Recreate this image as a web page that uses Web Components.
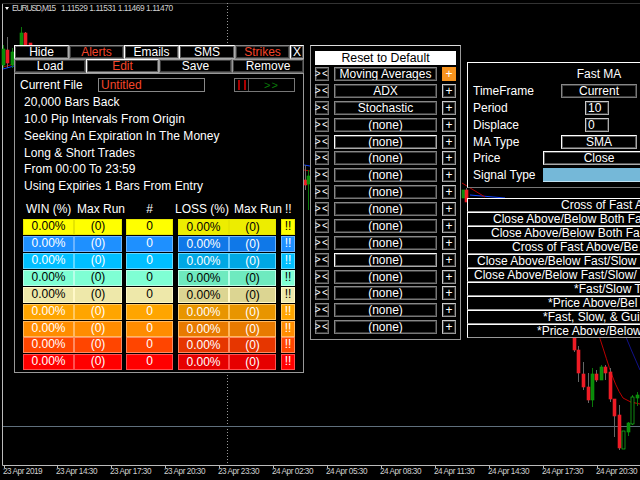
<!DOCTYPE html>
<html>
<head>
<meta charset="utf-8">
<title>EURUSD,M15</title>
<style>
  html, body { margin: 0; background: #000; }
  body { width: 640px; height: 480px; overflow: hidden; position: relative; font-family: "Liberation Sans", Arial, sans-serif; }
</style>
</head>
<body>
<chart-bg></chart-bg>

<float-panel style="left:14px;top:45px;width:290px;height:328px">
  <results-panel></results-panel>
</float-panel>

<float-panel style="left:310px;top:45px;width:151px;height:295px">
  <indicator-list></indicator-list>
</float-panel>

<float-panel style="left:467px;top:62px;width:173px;height:126px">
  <ma-settings></ma-settings>
</float-panel>

<float-panel style="left:467px;top:198px;width:173px;height:140px">
  <signal-list></signal-list>
</float-panel>

<script>
// chart behind everything: frame, grid lines, candles, time axis
class ChartBg extends HTMLElement {
  constructor() {
    super();
    this.attachShadow({ mode: "open" });
  }

  connectedCallback() {
    // x, high, low, body top, body bottom, colour
    const candles = [
      [3, 45, 68, 49, 65, "u"], [7, 37, 68, 50, 63, "d"], [12, 48, 68, 52, 65, "u"],
      [21, 27, 45, 33, 45, "u"], [25, 32, 46, 33, 45, "d"], [30, 43, 46, 43, 46, "d"],
      [305, 165, 190, 180, 185, "d"], [308, 170, 210, 176, 184, "u"],
      [463, 190, 198, 190, 198, "u"], [466, 188, 202, 190, 202, "d"],
      [574, 330, 352, 330, 350, "d"], [578, 346, 382, 350, 373, "d"],
      [583, 362, 390, 374, 387, "d"], [588, 373, 403, 387, 400, "d"],
      [592, 368, 407, 374, 400, "u"], [596, 370, 382, 374, 380, "d"],
      [601, 365, 380, 367, 380, "u"], [605, 365, 380, 367, 373, "d"],
      [610, 368, 402, 372, 399, "d"], [614, 399, 437, 399, 416, "d"],
      [619, 405, 450, 415, 448, "d"], [623, 431, 449, 431, 449, "h"],
      [628, 422, 436, 423, 432, "u"], [632, 395, 425, 397, 424, "h"],
      [637, 392, 406, 395, 398, "u"]
    ];
    const bars = candles.map(([x, hi, lo, top, bot, kind]) => {
      const fill = { u: "#0a8a0a", d: "#ee1c25", h: "#000" }[kind];
      const edge = { u: "#0c9c0c", d: "#ee1c25", h: "#1be820" }[kind];
      return `<path d="M${x + .5} ${hi}V${lo}" stroke="${kind === "d" ? "#666" : "#0a7a0a"}"/>
        <rect x="${x - 1}" y="${top}" width="3" height="${bot - top}" fill="${fill}" stroke="${edge}" stroke-width=".6"/>`;
    }).join("");
    const labels = [
      [3, "23 Apr 2019"], [56, "23 Apr 14:30"], [110, "23 Apr 17:30"], [164, "23 Apr 20:30"],
      [218, "23 Apr 23:30"], [272, "24 Apr 02:30"], [326, "24 Apr 05:30"], [380, "24 Apr 08:30"],
      [434, "24 Apr 11:30"], [488, "24 Apr 14:30"], [542, "24 Apr 17:30"], [596, "24 Apr 20:30"]
    ];
    this.shadowRoot.innerHTML = /* html */`
    <style>
      :host { position: absolute; inset: 0; display: block; }
      svg { position: absolute; inset: 0; }
      .title { position: absolute; left: 5px; top: 3px; display: flex; align-items: center;
        color: #d0d0d0; font: 8.4px/10px "Liberation Sans", sans-serif; letter-spacing: -.45px; white-space: pre; }
      .title::before { content: ""; border: 2.5px solid transparent; border-top: 3px solid #fff; border-bottom: 0; margin-right: 3px; }
      .title span:first-child { letter-spacing: -1.1px; margin-right: 6px; }
      .tick { position: absolute; top: 467px; color: #d0d0d0; font: 8.2px/10px "Liberation Sans", sans-serif; letter-spacing: -.45px; white-space: nowrap; }
    </style>
    <svg width="640" height="480" viewBox="0 0 640 480">
      <path d="M2.5 3V465.5H640" fill="none" stroke="#bbb"/>
      <path d="M2 3.5H640" stroke="#333"/>
      <path d="M227.5 3V465" stroke="#999" stroke-dasharray="1 2"/>
      <path d="M3 426.5H640" stroke="#5f6f7c"/>
      <path d="M3 69L14 66M304 165L310 166M470 195L505 198" fill="none" stroke="#14f"/>
      <path d="M3 67L14 64M304 170L310 171M462 183L485 197" fill="none" stroke="#b00"/>
      <path d="M597 330C606 355 612 382 623 398Q630 403 640 404" fill="none" stroke="#b00"/>
      <path d="M623 330Q632 352 640 370" fill="none" stroke="#118"/>
      ${bars}
      ${labels.map(([x]) => `<path d="M${x + 1.5} 465V468" stroke="#bbb"/>`).join("")}
    </svg>
    <div class="title"><span>EURUSD,M15</span><span>1.11529 1.11531 1.11469 1.11470</span></div>
    ${labels.map(([x, t]) => `<span class="tick" style="left:${x}px">${t}</span>`).join("")}
    `;
  }
}

// a window floating on the chart, its place on the canvas comes from the page
class FloatPanel extends HTMLElement {
  constructor() {
    super();
    this.attachShadow({ mode: "open" }).innerHTML = /* html */`
    <style>
      :host { position: absolute; display: block; box-sizing: border-box; background: #000; color: #fff; overflow: hidden; }
      ::slotted(*) { width: 100%; height: 100%; }
    </style>
    <slot></slot>`;
  }
}

// small button with the raised MT4 look
class MtButton extends HTMLElement {
  constructor() {
    super();
    this.attachShadow({ mode: "open" }).innerHTML = /* html */`
    <style>
      :host {
        display: flex; align-items: center; justify-content: center; box-sizing: border-box;
        height: 14px; background: var(--bg, #000); color: var(--fg, #fff);
        border: 1px solid; border-color: var(--b1, #999) var(--b2, #666) var(--b2, #666) var(--b1, #999);
        box-shadow: inset 0 0 0 1px var(--in, #3c3c3c);
        font-size: 12px; white-space: nowrap; overflow: hidden; line-height: 1;
      }
      :host([white]) { --b1: #fff; --b2: #aaa; --in: #555; }
      :host([dim]) { --b1: #888; --b2: #777; --in: #3c3c3c; }
      :host([red]) { --fg: #f4452a; }
    </style>
    <slot></slot>`;
  }
}

class ResultsPanel extends HTMLElement {
  constructor() {
    super();
    this.attachShadow({ mode: "open" });
  }

  connectedCallback() {
    const rows = [
      ["#ffff00", "#000", "#eded00", "#e6e600"],
      ["#1e90ff", "#fff", "#0f78e8", "#6ab4ff"],
      ["#00bfff", "#fff", "#00a8e4", "#60d8ff"],
      ["#7fffd4", "#000", "#6eeabf", "#b8ffe8"],
      ["#eee8aa", "#000", "#dcd592", "#fff8c8"],
      ["#ffa500", "#fff", "#e89500", "#ffc860"],
      ["#ff8c00", "#fff", "#e87a00", "#ffb860"],
      ["#ff4500", "#fff", "#e63600", "#ff8a60"],
      ["#ff0000", "#fff", "#e60000", "#ff5050"]
    ];
    const lines = [
      "20,000 Bars Back", "10.0 Pip Intervals From Origin", "Seeking An Expiration In The Money",
      "Long &amp; Short Trades", "From 00:00 To 23:59", "Using Expiries 1 Bars From Entry"
    ];
    const cell = (txt, bg, fg, edge, cls = "") =>
      `<span class="cell ${cls}" style="background:${bg};color:${fg};border-color:${edge}">${txt}</span>`;
    this.shadowRoot.innerHTML = /* html */`
    <style>
      :host { display: flex; flex-direction: column; font-size: 12px; }
      .tabs { display: grid; height: 14px; flex: none; }
      .top { grid-template-columns: 55px 55px 55px 56px 55px 14px; }
      .second { grid-template-columns: 72px 73px 73px 72px; }
      .body { flex: 1; border: 1px solid #999; padding: 4px 8px 0 5px; }
      .file { display: flex; align-items: center; height: 14px; margin-bottom: 2.875px; }
      .file label { width: 78px; }
      .file .name { width: 107px; justify-content: flex-start; padding-left: 2px; --b1: #888; --b2: #888; --in: transparent; }
      .pause { display: flex; margin-left: 29px; width: 61px; height: 14px; box-sizing: border-box; border: 1px solid #777; }
      .pause i { width: 14px; border-right: 1px solid #555; display: flex; gap: 4px; justify-content: center; padding: 1px 0; box-sizing: border-box; }
      .pause i::before, .pause i::after { content: ""; width: 2px; background: #a00; }
      .pause b { flex: 1; color: #0a7a0a; font-weight: 400; font-size: 11px; text-align: center; line-height: 12px; letter-spacing: 1px; }
      .line { height: 14px; line-height: 14px; margin-bottom: 2.875px; padding-left: 4px; white-space: nowrap; letter-spacing: .05px; }
      .head, .row { display: grid; grid-template-columns: 51px 48px 4px 47px 5px 51px 47px 5px 14px; margin-left: 3px; }
      .head { margin-top: 9px; margin-bottom: 3px; height: 14px; line-height: 14px; white-space: nowrap; }
      .head span { min-width: 0; }
      .row { height: 14px; margin-bottom: 2.875px; }
      .cell { box-sizing: border-box; border: 1px solid; text-align: center; line-height: 12px; }
      .loss { line-height: 14px; }
    </style>
    <div class="tabs top">
      <mt-button white>Hide</mt-button>
      <mt-button red dim>Alerts</mt-button>
      <mt-button white>Emails</mt-button>
      <mt-button white>SMS</mt-button>
      <mt-button red dim>Strikes</mt-button>
      <mt-button white>X</mt-button>
    </div>
    <div class="tabs second">
      <mt-button>Load</mt-button>
      <mt-button red white>Edit</mt-button>
      <mt-button>Save</mt-button>
      <mt-button>Remove</mt-button>
    </div>
    <div class="body">
      <div class="file">
        <label>Current File</label>
        <mt-button class="name" red>Untitled</mt-button>
        <div class="pause"><i></i><b>&gt;&gt;</b></div>
      </div>
      ${lines.map(t => `<div class="line">${t}</div>`).join("")}
      <div class="head">
        <span style="padding-left:3px">WIN (%)</span><span style="padding-left:3px">Max Run</span><span></span>
        <span style="text-align:center">#</span><span></span>
        <span style="margin-left:-3px">LOSS (%)</span><span style="padding-left:5px">Max Run</span><span></span>
        <span style="padding-left:4px">!!</span>
      </div>
      ${rows.map(([bg, fg, dark, edge]) => `<div class="row">
        ${cell("0.00%", bg, fg, edge)}${cell("(0)", bg, fg, edge)}<span></span>
        ${cell("0", bg, fg, edge)}<span></span>
        ${cell("0.00%", dark, fg, edge, "loss")}${cell("(0)", dark, fg, edge, "loss")}<span></span>
        ${cell("!!", bg, fg, edge)}
      </div>`).join("")}
    </div>
    `;
  }
}

class IndicatorList extends HTMLElement {
  constructor() {
    super();
    this.attachShadow({ mode: "open" });
  }

  connectedCallback() {
    const names = ["Moving Averages", "ADX", "Stochastic"].concat(Array(13).fill("(none)"));
    const rows = names.map((n, i) => /* html */`
      <div class="row">
        <mt-button class="swap" dim>&gt;&lt;</mt-button>
        <mt-button ${[4, 11].includes(i) ? "white" : "dim"}>${n}</mt-button>
        <mt-button style="${i === 0 ? "--bg:#f7931e;--b1:#f7931e;--b2:#f7931e;--in:#f7931e" : "--b1:#ccc;--b2:#999"}">+</mt-button>
      </div>`).join("");
    this.shadowRoot.innerHTML = /* html */`
    <style>
      :host { display: block; box-sizing: border-box; border: 1px solid #999; border-top-color: #ddd; padding: 5px 4px 0; }
      .reset { display: flex; align-items: center; justify-content: center; height: 14px; margin-bottom: 2px;
        background: #fff; color: #000; font-size: 12.3px; line-height: 14px; }
      .row { display: grid; grid-template-columns: 14px 103px 14px; column-gap: 5px; height: 14px; margin-bottom: 2.875px; }
      .swap { font-size: 10px; overflow: visible; letter-spacing: 1.5px; }
    </style>
    <div class="reset">Reset to Default</div>
    ${rows}
    `;
  }
}

class MaSettings extends HTMLElement {
  constructor() {
    super();
    this.attachShadow({ mode: "open" }).innerHTML = /* html */`
    <style>
      :host { display: block; box-sizing: border-box; border-top: 1px solid #fff; border-left: 1px solid #fff; border-bottom: 1px solid #777; padding: 4px 0 0 5px; font-size: 12px; }
      .head { height: 14px; margin: 0 0 2.875px 88px; width: 76px; text-align: center; line-height: 14px; }
      .row { display: grid; grid-template-columns: 88px 76px; height: 14px; margin-bottom: 2.875px; line-height: 14px; white-space: nowrap; }
      .num { width: 24px; margin-left: 24px; justify-content: flex-start; padding-left: 2px; --b1: #ccc; --b2: #aaa; }
      .wide { margin-left: -18px; width: 112px; }
      .swatch { margin-left: -18px; width: 112px; height: 14px; background: #75b8d8; border-bottom: 1px solid #bfe0f0; box-sizing: border-box; }
    </style>
    <div class="head">Fast MA</div>
    <div class="row"><span>TimeFrame</span><mt-button dim>Current</mt-button></div>
    <div class="row"><span>Period</span><mt-button class="num">10</mt-button></div>
    <div class="row"><span>Displace</span><mt-button class="num">0</mt-button></div>
    <div class="row"><span>MA Type</span><mt-button white>SMA</mt-button></div>
    <div class="row"><span>Price</span><mt-button class="wide" white>Close</mt-button></div>
    <div class="row"><span>Signal Type</span><div class="swatch"></div></div>
    `;
  }
}

class SignalList extends HTMLElement {
  constructor() {
    super();
    this.attachShadow({ mode: "open" });
  }

  connectedCallback() {
    // only the part that shows in the window is known, the rest runs off the edge
    const rows = [
      ["Cross of Fast A", 93], ["Close Above/Below Both Fa", 25], ["Close Above/Below Both Fa", 23],
      ["Cross of Fast Above/Be", 44], ["Close Above/Below Fast/Slow", 9], ["Close Above/Below Fast/Slow/", 6],
      ["*Fast/Slow T", 106], ["*Price Above/Bel", 80], ["*Fast, Slow, &amp; Gui", 75], ["*Price Above/Below", 69]
    ];
    this.shadowRoot.innerHTML = /* html */`
    <style>
      :host { display: flex; flex-direction: column; font-size: 12px; }
      div { flex: 1; box-sizing: border-box; border: solid #fff; border-width: 1px 0 1px 1px; border-bottom-color: #999;
        white-space: nowrap; line-height: 12px; overflow: hidden; }
    </style>
    ${rows.map(([t, x]) => `<div style="padding-left:${x}px">${t}</div>`).join("")}
    `;
  }
}

customElements.define("chart-bg", ChartBg);
customElements.define("float-panel", FloatPanel);
customElements.define("mt-button", MtButton);
customElements.define("results-panel", ResultsPanel);
customElements.define("indicator-list", IndicatorList);
customElements.define("ma-settings", MaSettings);
customElements.define("signal-list", SignalList);
</script>
</body>
</html>
